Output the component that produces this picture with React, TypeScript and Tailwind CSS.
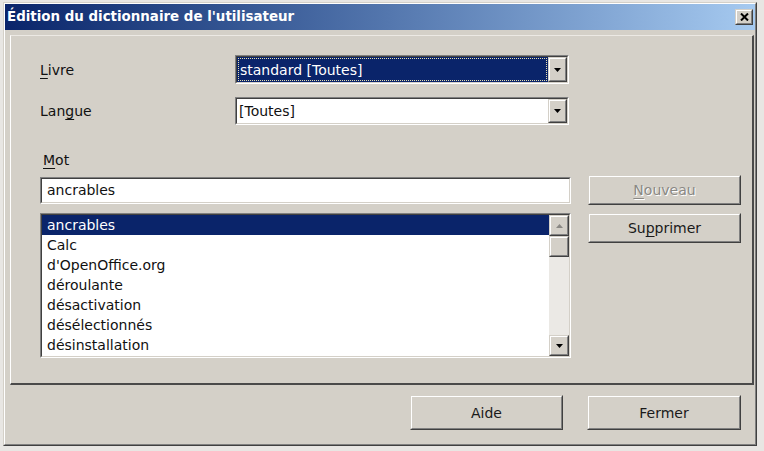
import React from "react";

function Raised({ className = "", children }: { className?: string; children?: React.ReactNode }) {
  return (
    <div className={`border border-t-[#d4d0c8] border-l-[#d4d0c8] border-r-[#404040] border-b-[#404040] bg-[#d4d0c8] ${className}`}>
      <div className="w-full h-full border border-t-white border-l-white border-r-[#808080] border-b-[#808080] flex items-center justify-center">
        {children}
      </div>
    </div>
  );
}

function Sunken({ className = "", children }: { className?: string; children?: React.ReactNode }) {
  return (
    <div className={`border border-t-[#808080] border-l-[#808080] border-r-white border-b-white ${className}`}>
      <div className="w-full h-full border border-t-[#404040] border-l-[#404040] border-r-[#d4d0c8] border-b-[#d4d0c8] flex overflow-hidden">
        {children}
      </div>
    </div>
  );
}

function Down({ color = "#000" }: { color?: string }) {
  return (
    <svg width="7" height="4" viewBox="0 0 7 4">
      <path d="M0 0H7L3.5 4Z" fill={color} />
    </svg>
  );
}
function Up({ color = "#000" }: { color?: string }) {
  return (
    <svg width="7" height="4" viewBox="0 0 7 4">
      <path d="M0 4H7L3.5 0Z" fill={color} />
    </svg>
  );
}

function Button({ className = "", children }: { className?: string; children?: React.ReactNode }) {
  return (
    <Raised className={className}>
      <span className="text-[14px] leading-[20px] text-[#1a1a1a]">{children}</span>
    </Raised>
  );
}

const items = [
  "ancrables",
  "Calc",
  "d'OpenOffice.org",
  "déroulante",
  "désactivation",
  "désélectionnés",
  "désinstallation",
];

export default function App() {
  return (
    <div className="w-[764px] h-[451px] bg-[#e8e6e3] pt-[2px] pl-[3px] font-['DejaVu_Sans',Verdana,sans-serif] overflow-hidden">
      <div className="w-[754px] h-[444px] border border-t-[#d4d0c8] border-l-[#d4d0c8] border-r-[#404040] border-b-[#404040]">
        <div className="w-full h-full border border-t-white border-l-white border-r-[#808080] border-b-[#808080] bg-[#d4d0c8] flex flex-col">
          {/* Title bar */}
          <div className="h-[26px] bg-linear-to-r from-[#0a246a] to-[#a6caf0] flex items-center pl-[2px] pr-[2px]">
            <span className="text-white font-bold text-[13.4px] leading-[18px]">Édition du dictionnaire de l'utilisateur</span>
            <Raised className="ml-auto w-[18px] h-[16px]">
              <svg width="9" height="8" viewBox="0 0 9 8">
                <path d="M1 0.5L8 7.5M8 0.5L1 7.5" stroke="#000" strokeWidth="2" />
              </svg>
            </Raised>
          </div>

          {/* Body */}
          <div className="flex-1 pl-[5px] pt-[5px] flex flex-col">
            <div className="w-[744px] h-[350px] border-l border-t border-l-white border-t-[#ece9e4] border-r-2 border-b-2 border-r-[#4a4a4a] border-b-[#4a4a4a] pl-[29px] pt-[19px] text-[14px] text-[#111]">
              {/* Livre */}
              <div className="flex items-center h-[29px]">
                <div className="w-[195px] leading-[20px]"><span className="underline underline-offset-[3px]">L</span>ivre</div>
                <Sunken className="w-[334px] h-[29px]">
                  <div className="flex-1 bg-[#0a246a] p-[1px]">
                    <div className="w-full h-full border border-dotted border-[#e8e0b0] flex items-center pl-[1px] text-white leading-[20px]">standard [Toutes]</div>
                  </div>
                  <Raised className="w-[19px] h-full">
                    <Down />
                  </Raised>
                </Sunken>
              </div>
              {/* Langue */}
              <div className="flex items-center h-[28px] mt-[13px]">
                <div className="w-[195px] leading-[20px]">Lan<span className="underline underline-offset-[3px]">g</span>ue</div>
                <Sunken className="w-[334px] h-[28px]">
                  <div className="flex-1 bg-white flex items-center pl-[2px] leading-[20px]">[Toutes]</div>
                  <Raised className="w-[19px] h-full">
                    <Down />
                  </Raised>
                </Sunken>
              </div>
              {/* Mot */}
              <div className="mt-[25px] h-[20px] leading-[20px] pl-[3px]"><span className="underline underline-offset-[3px]">M</span>ot</div>

              <div className="mt-[5px] grid grid-cols-[531px_153px] gap-x-[17px]">
                <div className="h-[30px] flex items-center">
                  <Sunken className="w-full h-[27px]">
                    <div className="flex-1 bg-white flex items-center pl-[5px] leading-[20px]">ancrables</div>
                  </Sunken>
                </div>
                <Raised className="h-[30px]">
                  <span className="text-[14px] leading-[20px] text-[#8a8884] [text-shadow:1px_1px_0_#ffffff]"><span className="underline underline-offset-[3px]">N</span>ouveau</span>
                </Raised>

                <Sunken className="mt-[8px] h-[145px]">
                  <div className="flex-1 bg-white flex flex-col">
                    {items.map((t, i) => (
                      <div
                        key={t}
                        className={`h-[20px] shrink-0 leading-[20px] pl-[5px] ${i === 0 ? "bg-[#0a246a] text-white" : "text-[#111]"}`}
                      >
                        {t}
                      </div>
                    ))}
                  </div>
                  <div className="w-[20px] flex flex-col bg-[#ebe9e5]">
                    <Raised className="h-[21px] w-full">
                      <Up color="#8a8884" />
                    </Raised>
                    <Raised className="h-[21px] w-full" />
                    <div className="flex-1" />
                    <Raised className="h-[21px] w-full">
                      <Down />
                    </Raised>
                  </div>
                </Sunken>
                <div className="mt-[8px]">
                  <Button className="h-[30px]">
                    Su<span className="underline underline-offset-[3px]">p</span>primer
                  </Button>
                </div>
              </div>
            </div>

            <div className="flex justify-end gap-[24px] pr-[14px] pt-[10px]">
              <Button className="w-[153px] h-[35px]">Aide</Button>
              <Button className="w-[154px] h-[35px]">Fermer</Button>
            </div>
          </div>
        </div>
      </div>
    </div>
  );
}
